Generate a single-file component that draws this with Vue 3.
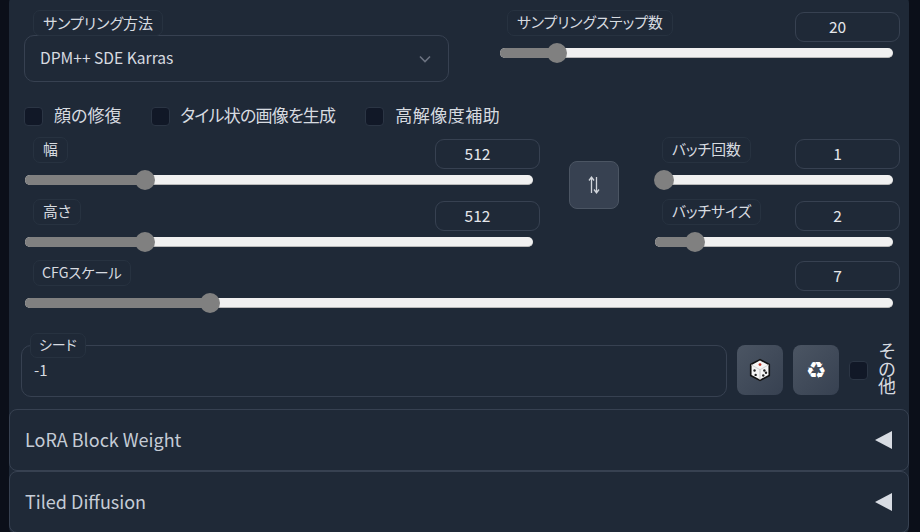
<script setup>
const top = { label: 'サンプリングステップ数', value: 20, pct: 14.5 }
const wh = [
  { label: '幅', value: 512, pct: 23.6 },
  { label: '高さ', value: 512, pct: 23.6 }
]
const batch = [
  { label: 'バッチ回数', value: 1, pct: 3.8 },
  { label: 'バッチサイズ', value: 2, pct: 17 }
]
const cfg = { label: 'CFGスケール', value: 7, pct: 21.3 }
const checks = [
  { text: '顔の修復', cls: '' },
  { text: 'タイル状の画像を生成', cls: 'tight' },
  { text: '高解像度補助', cls: 'loose' }
]
const sections = ['LoRA Block Weight', 'Tiled Diffusion']
</script>

<template>
  <div class="page">
    <main class="panel">
      <section class="row-top">
        <div class="sampler">
          <span class="tag">サンプリング方法</span>
          <div class="select">
            <span>DPM++ SDE Karras</span>
            <svg class="chevron" width="14" height="14" viewBox="0 0 14 14"><path d="M2 4.5 7 9.5 12 4.5" fill="none" stroke="#6b7280" stroke-width="1.6"/></svg>
          </div>
        </div>
        <div class="field steps">
          <div class="head"><span class="tag">{{ top.label }}</span><span class="num">{{ top.value }}</span></div>
          <div class="track"><div class="fill" :style="{ width: top.pct + '%' }"><i class="thumb"></i></div></div>
        </div>
      </section>

      <section class="checks">
        <label v-for="c in checks" :key="c.text" class="check"><i class="box"></i><span :class="c.cls">{{ c.text }}</span></label>
      </section>

      <section class="dims">
        <div class="col wh">
          <div v-for="f in wh" :key="f.label" class="field">
            <div class="head"><span class="tag">{{ f.label }}</span><span class="num">{{ f.value }}</span></div>
            <div class="track"><div class="fill" :style="{ width: f.pct + '%' }"><i class="thumb"></i></div></div>
          </div>
        </div>
        <button class="swap">
          <svg width="14" height="20" viewBox="0 0 14 20"><path d="M4.5 18V2.500M2 5.500 4.500 2 7 5.500M9.500 2V17.500M7 14.500 9.500 18 12 14.500" fill="none" stroke="#d1d5db" stroke-width="1.300"/></svg>
        </button>
        <div class="col batch">
          <div v-for="f in batch" :key="f.label" class="field">
            <div class="head"><span class="tag">{{ f.label }}</span><span class="num">{{ f.value }}</span></div>
            <div class="track"><div class="fill" :style="{ width: f.pct + '%' }"><i class="thumb"></i></div></div>
          </div>
        </div>
      </section>

      <section class="field cfg">
        <div class="head"><span class="tag">{{ cfg.label }}</span><span class="num">{{ cfg.value }}</span></div>
        <div class="track"><div class="fill" :style="{ width: cfg.pct + '%' }"><i class="thumb"></i></div></div>
      </section>

      <section class="seed-row">
        <div class="seed">
          <span class="tag seed-tag">シード</span>
          <span class="seed-val">-1</span>
        </div>
        <button class="tool">
          <svg width="24" height="24" viewBox="0 0 22 22">
            <path d="M11 1.500 19.500 6V16L11 20.500 2.500 16V6Z" fill="#f5f5f5" stroke="#111" stroke-width="1.500" stroke-linejoin="round"/>
            <path d="M3 6.300 11 10.700 19 6.300" fill="none" stroke="#cfcfcf" stroke-width=".8"/>
            <path d="M11 10.700V20" stroke="#bdbdbd" stroke-width=".8"/>
            <circle cx="11" cy="6" r="1.300" fill="#c0392b"/>
            <circle cx="6" cy="11.500" r="1.100" fill="#222"/>
            <circle cx="7" cy="15.500" r="1.100" fill="#222"/>
            <circle cx="15" cy="11.500" r="1.100" fill="#222"/>
            <circle cx="16.500" cy="13.500" r="1.100" fill="#222"/>
            <circle cx="14" cy="16" r="1.100" fill="#222"/>
          </svg>
        </button>
        <button class="tool recycle">♻</button>
        <i class="box extra"></i>
        <span class="other">その他</span>
      </section>

      <section v-for="s in sections" :key="s" class="accordion">
        <span>{{ s }}</span>
        <i class="tri"></i>
      </section>
    </main>
  </div>
</template>

<style>
html, body { margin: 0; height: 532px; overflow: hidden; background: #0b0f19; }
</style>

<style scoped>
.page {
  width: 920px;
  height: 532px;
  overflow: hidden;
  background: #0b0f19;
  font-family: "Noto Sans CJK JP", "Noto Sans", sans-serif;
  font-feature-settings: "palt";
  color: #d1d5db;
}
.panel {
  box-sizing: border-box;
  width: 900px;
  height: 540px;
  margin: -5px 0 0 9px;
  padding-top: 15px;
  background: #1f2937;
  border-radius: 8px;
}
.tag {
  box-sizing: border-box;
  display: inline-flex;
  align-items: center;
  height: 26px;
  padding: 0 9px 2px;
  font-size: 14.8px;
  line-height: 1;
  color: #d7dbe0;
  background: #1f2937;
  border: 1px solid #273240;
  border-radius: 7px;
  position: relative;
  z-index: 1;
}
.row-top { display: flex; padding: 0 9px 0 15px; }
.sampler { width: 425px; margin-right: 51px; }
.sampler .tag { margin-left: 9px; display: flex; width: fit-content; font-size: 15px; }
.select {
  box-sizing: border-box;
  height: 47px;
  margin-top: -1px;
  padding: 0 16px 4px 15px;
  display: flex;
  align-items: center;
  justify-content: space-between;
  font-size: 15.6px;
  color: #d7dbe0;
  border: 1px solid #374151;
  border-radius: 10px;
}
.chevron { margin-top: 4px; }
.field { width: 100%; }
.steps { flex: 1; min-width: 0; width: auto; }
.head { display: flex; justify-content: space-between; align-items: flex-start; height: 32px; padding-left: 7px; }
.wh .head .tag { margin-left: 2px; }
.wh .track, .cfg .track { margin-left: 1px; }
.cfg .head .tag { margin-left: 2px; padding: 0 8px 2px; font-size: 14.2px; }
.num {
  box-sizing: border-box;
  width: 105px;
  height: 30px;
  margin-top: 2px;
  padding: 0 20px 2px 0;
  display: flex;
  align-items: center;
  justify-content: center;
  font-size: 15.5px;
  color: #e5e7eb;
  border: 1px solid #374151;
  border-radius: 9px;
}
.track {
  box-sizing: border-box;
  height: 10px;
  margin: 6px 7px 0 0;
  background: #f0f0f0;
  border-radius: 5px;
  border-bottom: 1px solid #b8b8b8;
}
.fill {
  position: relative;
  height: 10px;
  background: #808080;
  border-radius: 5px 0 0 5px;
}
.thumb {
  position: absolute;
  right: -10px;
  top: -5px;
  width: 20px;
  height: 20px;
  background: #808080;
  border-radius: 50%;
}
.checks { display: flex; height: 21px; margin-top: 24px; padding-left: 15px; }
.check {
  display: flex;
  align-items: center;
  gap: 11px;
  margin-right: 30px;
  font-size: 17px;
  line-height: 21px;
  color: #d7dbe0;
}
.check span { padding-bottom: 4px; }
.check .tight { letter-spacing: -0.8px; margin-left: -1px; }
.check .loose { letter-spacing: 0.5px; }
.box {
  box-sizing: border-box;
  flex: none;
  width: 19px;
  height: 19px;
  background: #111827;
  border: 1px solid #2b3544;
  border-radius: 4px;
}
.dims { display: flex; margin-top: 10px; padding: 0 9px 0 15px; }
.col { display: flex; flex-direction: column; gap: 14px; }
.wh { width: 516px; }
.batch { width: 245px; margin-left: auto; }
.swap {
  box-sizing: border-box;
  width: 50px;
  height: 48px;
  margin: 24px 0 0 29px;
  padding: 0;
  display: flex;
  align-items: center;
  justify-content: center;
  background: #374151;
  border: 1px solid #4b5563;
  border-radius: 8px;
}
.cfg { box-sizing: border-box; margin-top: 13px; padding: 0 9px 0 15px; }
.cfg .num { margin-top: 1px; }
.seed-row { display: flex; align-items: flex-start; height: 52px; margin-top: 37px; padding-left: 12px; }
.seed {
  box-sizing: border-box;
  position: relative;
  flex: none;
  width: 706px;
  height: 52px;
  padding: 14px 12px 0;
  font-size: 15px;
  line-height: 20px;
  color: #d7dbe0;
  border: 1px solid #374151;
  border-radius: 10px;
}
.seed-tag { position: absolute; left: 8px; top: -13px; height: 25px; padding: 0 8px 4px; font-size: 14px; }
.tool {
  box-sizing: border-box;
  flex: none;
  width: 46px;
  height: 50px;
  margin-left: 10px;
  padding: 0;
  display: flex;
  align-items: center;
  justify-content: center;
  background: linear-gradient(to bottom right, #4b5563, #374151);
  border: none;
  border-radius: 8px;
}
.recycle { font-family: "DejaVu Sans", sans-serif; font-size: 23px; color: #fff; }
.extra { margin: 16px 0 0 10px; }
.other {
  width: 18px;
  margin: -3px 0 0 10px;
  font-size: 18px;
  line-height: 17.5px;
  text-align: center;
  word-break: break-all;
  color: #d7dbe0;
}
.accordion {
  box-sizing: border-box;
  height: 62px;
  padding: 0 16px 0 15px;
  display: flex;
  align-items: center;
  justify-content: space-between;
  font-size: 18px;
  color: #c5ccd6;
  border: 1px solid #374151;
  border-radius: 8px;
}
.accordion span { padding-bottom: 2px; }
.seed-row + .accordion { margin-top: 12px; }
.tri {
  width: 0;
  height: 0;
  border-style: solid;
  border-width: 9px 17px 9px 0;
  border-color: transparent #d8dce3 transparent transparent;
}
</style>
